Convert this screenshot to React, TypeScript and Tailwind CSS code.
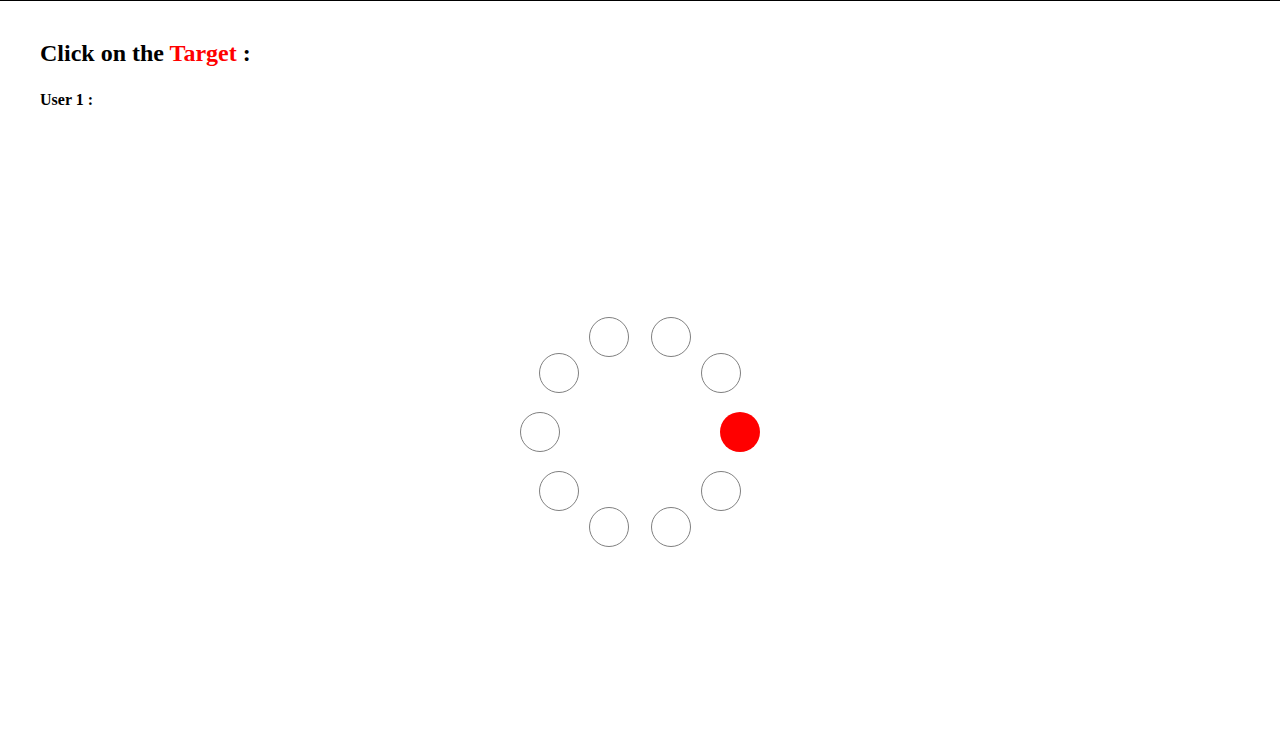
import React from "react";

export default function App() {
  const n = 10;
  const r = 100;
  const cx = 640;
  const cy = 432;
  const circles = Array.from({ length: n }, (_, i) => {
    const a = (i * 2 * Math.PI) / n;
    return { x: cx + r * Math.cos(a), y: cy + r * Math.sin(a), target: i === 0 };
  });
  return (
    <div
      className="relative w-full h-[729px] bg-white border-t border-black overflow-hidden"
      style={{ fontFamily: '"Liberation Serif", "Times New Roman", serif' }}
    >
      <div className="px-[40px]">
        <h2 className="mt-[38px] text-[24px] leading-[28px] font-bold text-black">
          Click on the <span className="text-[#ff0000]">Target</span> :
        </h2>
        <p className="mt-[24px] text-[16px] leading-[18px] font-bold text-black">User 1 :</p>
      </div>
      {circles.map((c, i) => (
        <div
          key={i}
          className={
            c.target
              ? "absolute w-[40px] h-[40px] rounded-full bg-[#ff0000]"
              : "absolute w-[40px] h-[40px] rounded-full border border-[#808080] bg-white"
          }
          style={{ left: c.x - 20, top: c.y - 1 - 20 }}
        />
      ))}
    </div>
  );
}
